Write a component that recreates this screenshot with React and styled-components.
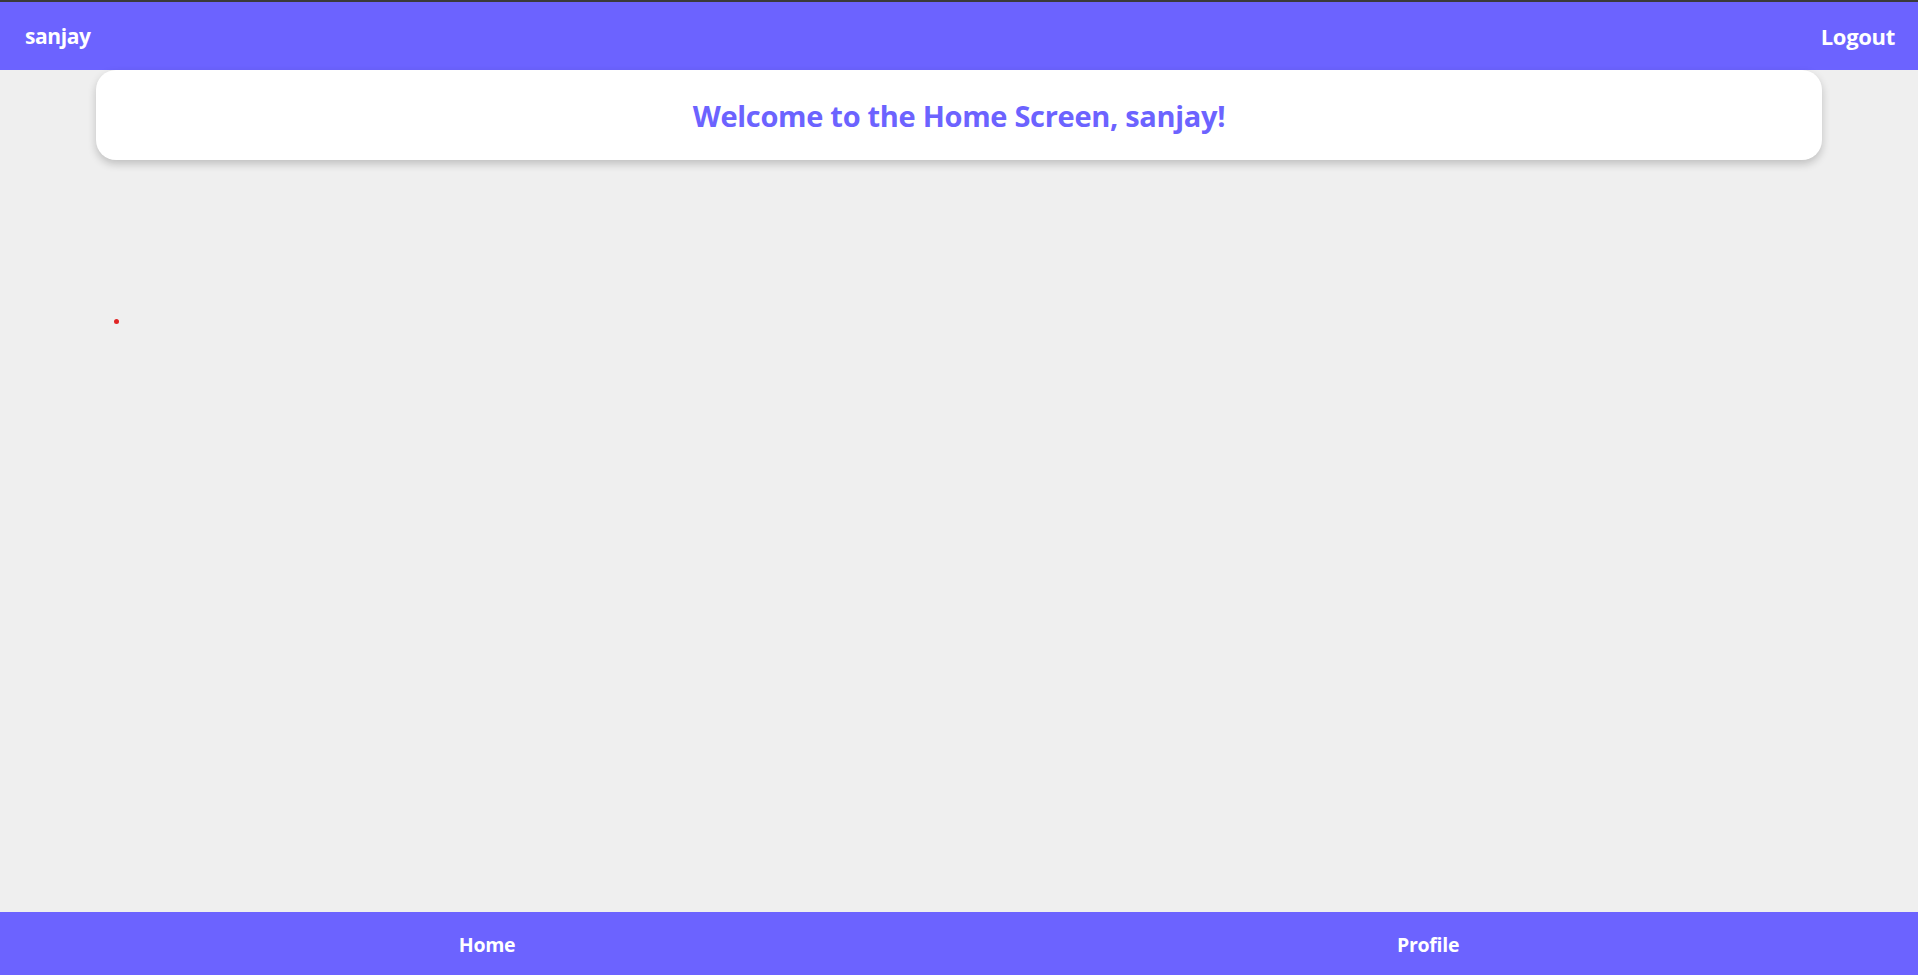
import React from "react";
import styled, { createGlobalStyle } from "styled-components";

const GlobalStyle = createGlobalStyle`
  html, body {
    margin: 0;
    padding: 0;
    background: #efefef;
    font-family: "Open Sans", "Noto Sans", sans-serif;
  }
  * { box-sizing: border-box; }
`;

const Page = styled.div`
  height: 100vh;
  display: flex;
  flex-direction: column;
  background: #efefef;
`;

const Header = styled.header`
  height: 70px;
  border-top: 2px solid #3a3a3a;
  background: #6c63ff;
  display: flex;
  align-items: center;
  justify-content: space-between;
  padding: 0 23px 0 25px;
  color: #ffffff;
`;

const Brand = styled.div`
  font-size: 21px;
  font-weight: 700;
  letter-spacing: -0.4px;
`;

const LogoutButton = styled.button`
  background: none;
  border: none;
  padding: 0;
  color: #ffffff;
  font-family: inherit;
  font-size: 22px;
  font-weight: 700;
  letter-spacing: -0.3px;
  cursor: pointer;
`;

const Main = styled.main`
  flex: 1;
  display: flex;
  flex-direction: column;
`;

const WelcomeCard = styled.section`
  width: 90%;
  margin: 0 auto;
  height: 90px;
  background: #ffffff;
  border-radius: 20px;
  box-shadow: 0 4px 8px rgba(0, 0, 0, 0.2);
  display: flex;
  align-items: center;
  justify-content: center;
`;

const Title = styled.h1`
  margin: 0;
  color: #6c63ff;
  font-size: 29px;
  font-weight: 700;
  letter-spacing: -0.3px;
`;

const Content = styled.div`
  padding: 159px 0 0 114px;
`;

const Dot = styled.span`
  display: block;
  width: 5px;
  height: 5px;
  border-radius: 50%;
  background: #e02424;
`;

const Footer = styled.footer`
  height: 63px;
  background: #6c63ff;
  display: flex;
  align-items: center;
  justify-content: space-around;
  padding: 2px 18px 0;
`;

const NavLink = styled.a`
  color: #ffffff;
  font-size: 19.5px;
  font-weight: 700;
  letter-spacing: -0.3px;
  text-decoration: none;
  cursor: pointer;
`;

export default function App() {
  return (
    <>
      <GlobalStyle />
      <Page>
        <Header>
          <Brand>sanjay</Brand>
          <LogoutButton>Logout</LogoutButton>
        </Header>
        <Main>
          <WelcomeCard>
            <Title>Welcome to the Home Screen, sanjay!</Title>
          </WelcomeCard>
          <Content>
            <Dot />
          </Content>
        </Main>
        <Footer>
          <NavLink>Home</NavLink>
          <NavLink>Profile</NavLink>
        </Footer>
      </Page>
    </>
  );
}
